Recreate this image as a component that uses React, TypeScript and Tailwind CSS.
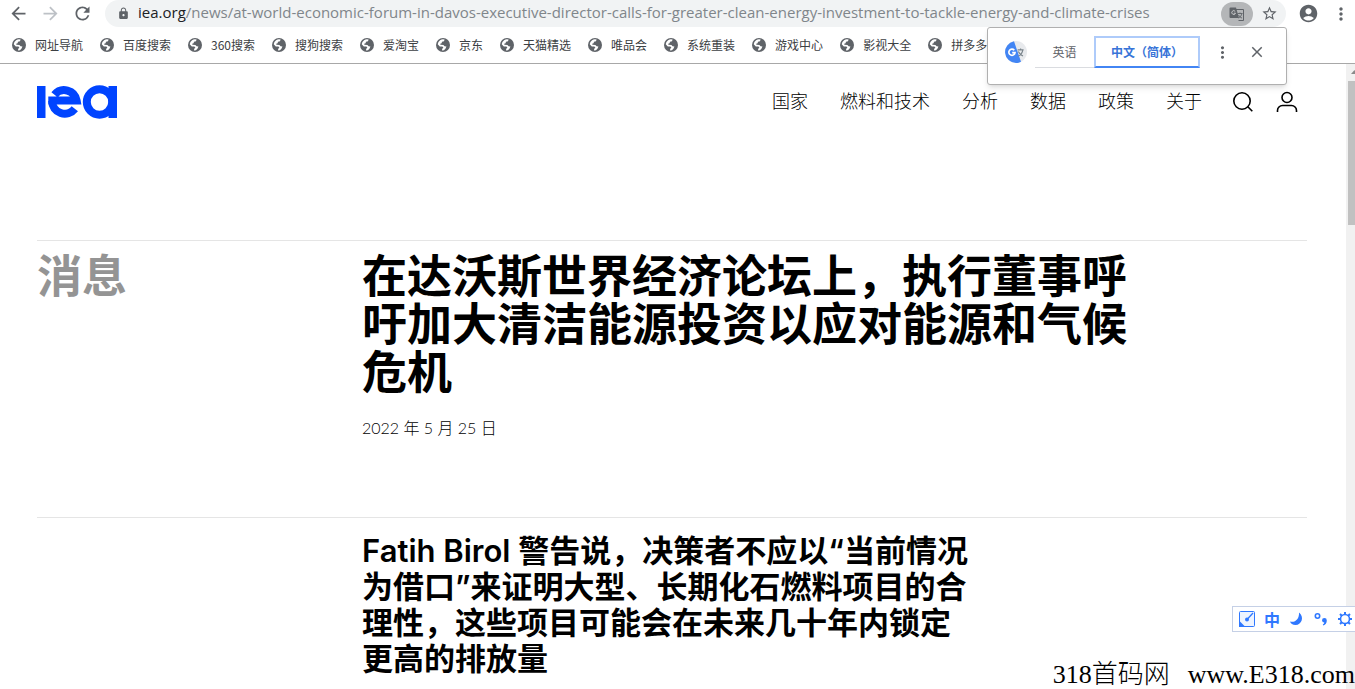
import React from 'react';
import {
    MdAccountCircle, MdArrowBack, MdArrowForward, MdClose, MdLock,
    MdMoreVert, MdRefresh, MdStarBorder,
} from 'react-icons/md';

const bookmarks = [
    '网址导航', '百度搜索', '360搜索', '搜狗搜索', '爱淘宝', '京东',
    '天猫精选', '唯品会', '系统重装', '游戏中心', '影视大全', '拼多多',
];

const navItems = ['国家', '燃料和技术', '分析', '数据', '政策', '关于'];

const Globe = () => (
    <svg width="14" height="14" viewBox="0 0 14 14" aria-hidden="true" className="shrink-0">
        <circle cx="7" cy="7" r="7" fill="#5f6368" />
        <path d="M8.600 1.600L8 3.200 6 3.700 5.600 5.200 4.200 5.800 4.400 6.800 7.400 6.900 8.600 8.200 10.400 8.600 9.600 10.600 8 12.200 6 12.400 6.200 10.800 7.400 9.800 6.400 8.600 3.800 8.400 1.700 6.200A5.400 5.400 0 0 1 8.600 1.600z" fill="#fff" />
    </svg>
);

const TranslateBadge = () => (
    <svg width="16" height="14" viewBox="0 0 16 14" aria-hidden="true">
        <path d="M7 2.500h7.500v11H9.500" fill="none" stroke="#5f6368" strokeWidth="1" />
        <path d="M8.500 6.500h5M11 5.500v1M9.500 11c2-1 3-2.500 3.300-4.500M9.500 8c.8 1.500 2 2.500 3.500 3" fill="none" stroke="#5f6368" strokeWidth=".9" />
        <path d="M1.500 0.500H7L10 11H1.500a1 1 0 0 1-1-1V1.500a1 1 0 0 1 1-1z" fill="#5f6368" />
        <path d="M6.200 4.400a1.900 1.900 0 1 0 .3 1.800H4.800" fill="none" stroke="#d0d1d3" strokeWidth=".9" />
    </svg>
);

const TranslateLogo = () => (
    <svg width="22" height="22" viewBox="0 0 22 22" aria-hidden="true">
        <circle cx="11" cy="11" r="11" fill="#e8eaed" />
        <path d="M9 .2a11 11 0 0 0 2 21.800c2 0 3.500-.5 5-1.300z" fill="#4285f4" />
        <path d="M9.300 9.200a3.100 3.100 0 1 0 .7 2.400H7.200" fill="none" stroke="#fff" strokeWidth="1.700" />
        <path d="M12.600 8.800h6M15.600 7.400v1.400M13.500 15c2.500-1.300 4-3.200 4.300-6.200M13.300 10.400c1 2 2.500 3.500 4.700 4.600" fill="none" stroke="#7b858c" strokeWidth="1.200" />
    </svg>
);

const IeaLogo = () => (
    <svg width="80" height="34" viewBox="0 0 80 34" aria-hidden="true">
        <g fill="#0044ff">
            <path d="M0 1h8.500v32H0z" />
            <path d="M71.500 1H80v32h-8.500z" />
        </g>
        <g fill="none" stroke="#0044ff">
            <path d="M17.500 9.700A12.600 12.600 0 0 1 39.600 15.500H11.300" strokeWidth="8" />
            <path d="M15.200 16A12.600 12.600 0 0 0 37.800 23.800" strokeWidth="8" />
            <circle cx="62.500" cy="17" r="12.700" strokeWidth="8" />
        </g>
    </svg>
);

const BrowserBar = () => (
    <div className="flex h-[27px] items-center pr-1 pl-2 text-[#5f6368]">
        <button aria-label="后退" className="flex w-8 shrink-0"><MdArrowBack size={21} /></button>
        <button aria-label="前进" className="flex w-8 shrink-0 text-[#bdc1c6]"><MdArrowForward size={21} /></button>
        <button aria-label="刷新" className="flex w-[33px] shrink-0"><MdRefresh size={21} /></button>
        <div className="flex h-[27px] min-w-0 flex-1 items-center rounded-full bg-[#f1f3f4] pl-3">
            <MdLock size={13} className="shrink-0" />
            <span className="ml-2 flex-1 truncate pb-1 font-['Open_Sans'] text-[15px] leading-6 text-[#80868b]">
                <span className="text-[#202124]">iea.org</span>
                /news/at-world-economic-forum-in-davos-executive-director-calls-for-greater-clean-energy-investment-to-tackle-energy-and-climate-crises
            </span>
            <button aria-label="翻译此页" className="flex h-6 w-8 shrink-0 items-center justify-center rounded-full bg-[#b4b6b8]">
                <TranslateBadge />
            </button>
            <button aria-label="收藏" className="mr-2 ml-2 flex shrink-0"><MdStarBorder size={17} /></button>
        </div>
        <button aria-label="账号" className="ml-3 flex shrink-0"><MdAccountCircle size={21} /></button>
        <button aria-label="菜单" className="ml-3 flex shrink-0"><MdMoreVert size={20} /></button>
    </div>
);

const BookmarkBar = () => (
    <nav aria-label="书签" className="flex h-9 items-center gap-[17px] overflow-hidden pl-3 text-xs text-[#3c4043]">
        {bookmarks.map(name => (
            <a key={name} href="#" className="flex shrink-0 items-center gap-[9px] whitespace-nowrap">
                <Globe />
                {name}
            </a>
        ))}
    </nav>
);

const TranslatePopup = () => (
    <div className="absolute top-[27px] right-[68px] flex h-[58px] w-[300px] items-start rounded-[3px] border border-[#b0b0b0] bg-white pt-2 pl-[17px] text-xs shadow-md">
        <div className="mt-[5px]"><TranslateLogo /></div>
        <button className="ml-2 h-8 w-[59px] border-b border-[#dadce0] text-[#5f6368]">英语</button>
        <button className="h-8 w-[106px] border-2 border-[#aecbfa] border-b-[#4285f4] font-bold text-[#3874d8]">中文（简体）</button>
        <button aria-label="选项" className="mt-[7px] ml-[13px] flex text-[#5f6368]"><MdMoreVert size={19} /></button>
        <button aria-label="关闭" className="mt-[7px] ml-4 flex text-[#5f6368]"><MdClose size={18} /></button>
    </div>
);

const SiteHeader = () => (
    <header className="flex items-start justify-between pt-[21px] pr-[9px]">
        <a href="#" aria-label="iea"><IeaLogo /></a>
        <div className="flex h-[34px] items-center">
            <nav className="flex gap-8 pb-1 text-lg font-light">
                {navItems.map(item => <a key={item} href="#">{item}</a>)}
            </nav>
            <button aria-label="搜索" className="ml-[30px] flex">
                <svg width="22" height="22" viewBox="0 0 22 22" fill="none" stroke="#000" strokeWidth="1.6">
                    <circle cx="10" cy="10" r="8.200" />
                    <path d="M15.800 15.800l4.500 4.500" />
                </svg>
            </button>
            <button aria-label="账户" className="ml-[22px] flex">
                <svg width="22" height="22" viewBox="0 0 22 22" fill="none" stroke="#000" strokeWidth="1.6">
                    <circle cx="11" cy="6.500" r="5" />
                    <path d="M1.500 21v-1.500a5 5 0 0 1 5-5h9a5 5 0 0 1 5 5V21" />
                </svg>
            </button>
        </div>
    </header>
);

const ImeBar = () => (
    <div className="absolute top-[606px] right-0 flex h-[26px] items-center gap-[9px] border border-r-0 border-[#c5d0e6] bg-white pr-[2px] pl-[6px] text-[#2f78ff]">
        <svg width="16" height="16" viewBox="0 0 16 16">
            <rect x=".5" y=".5" width="15" height="15" rx="1" fill="#eef4ff" stroke="currentColor" />
            <path d="M0 9.500L6.500 16H0z" fill="currentColor" />
            <circle cx="8" cy="8.500" r="2" fill="currentColor" />
            <path d="M8 8.500l6-6.500" stroke="currentColor" strokeWidth="1.300" />
        </svg>
        <span className="w-4 text-center text-base leading-4 font-bold">中</span>
        <svg width="16" height="16" viewBox="0 0 16 16">
            <path d="M10 1.500c5.500 4 3 12.500-3.500 12.500C3.500 14 1.800 12.500 1 10.500c5 1.500 9.500-2.500 9-9z" fill="currentColor" />
        </svg>
        <svg width="14" height="16" viewBox="0 0 14 16">
            <circle cx="3.500" cy="5" r="2.200" fill="none" stroke="currentColor" strokeWidth="1.600" />
            <path d="M8 9.500a2.400 2.400 0 1 1 4.800 0c0 2.500-1.300 4.300-3.500 5l-.5-1c1-.5 1.500-1.200 1.500-2A2.300 2.300 0 0 1 8 9.500z" fill="currentColor" />
        </svg>
        <svg width="16" height="16" viewBox="0 0 16 16" fill="none" stroke="currentColor">
            <circle cx="8" cy="8" r="4.500" strokeWidth="1.600" />
            <path d="M8 1v2.500M8 12.500V15M1 8h2.500M12.500 8H15M3 3l1.800 1.800M11.200 11.200L13 13M13 3l-1.800 1.800M4.800 11.200L3 13" strokeWidth="2" />
        </svg>
    </div>
);

const Scrollbar = () => (
    <div aria-hidden="true" className="w-[9px] shrink-0 overflow-hidden bg-[#f1f1f1] pl-[2px]">
        <svg width="7" height="17" viewBox="0 0 7 17"><path d="M3 10l3.500-4 .5.500V10z" fill="#8a8a8a" /></svg>
        <div className="h-36 bg-[#c1c1c1]" />
    </div>
);

export default function App() {
    return (
        <div className="relative flex min-h-screen flex-col overflow-hidden bg-white font-['Noto_Sans_CJK_SC',sans-serif] text-black" lang="zh-CN">
            <BrowserBar />
            <BookmarkBar />
            <div className="flex flex-1 border-t border-[#a8a8a8]">
                <main className="min-w-0 flex-1 pr-[39px] pl-[37px]">
                    <SiteHeader />
                    <section className="mt-[121px] flex border-t border-[#e5e5e5] pt-[9px]">
                        <h2 className="w-[325px] shrink-0 text-[45px] leading-[48px] font-bold text-[#949494]">消息</h2>
                        <div className="max-w-[784px]">
                            <h1 className="text-[45px] leading-[48px] font-bold">在达沃斯世界经济论坛上，执行董事呼吁加大清洁能源投资以应对能源和气候危机</h1>
                            <p className="mt-[22px] font-['Lato','Noto_Sans_CJK_SC',sans-serif] text-base leading-6 font-light">2022 年 5 月 25 日</p>
                        </div>
                    </section>
                    <section className="mt-[77px] border-t border-[#e5e5e5] pt-[15px] pl-[325px]">
                        <p className="max-w-[612px] font-['Inter','Noto_Sans_CJK_SC',sans-serif] text-[31px] leading-9 font-semibold">
                            Fatih Birol 警告说，决策者不应以“当前情况为借口”来证明大型、长期化石燃料项目的合理性，这些项目可能会在未来几十年内锁定更高的排放量
                        </p>
                    </section>
                </main>
                <Scrollbar />
            </div>
            <TranslatePopup />
            <ImeBar />
            <div className="absolute right-0 bottom-0 flex gap-[18px] whitespace-nowrap font-['Liberation_Serif','Noto_Sans_CJK_SC',serif] text-[26px] leading-7 font-light">
                <span>318首码网</span>
                <span>www.E318.com</span>
            </div>
        </div>
    );
}
